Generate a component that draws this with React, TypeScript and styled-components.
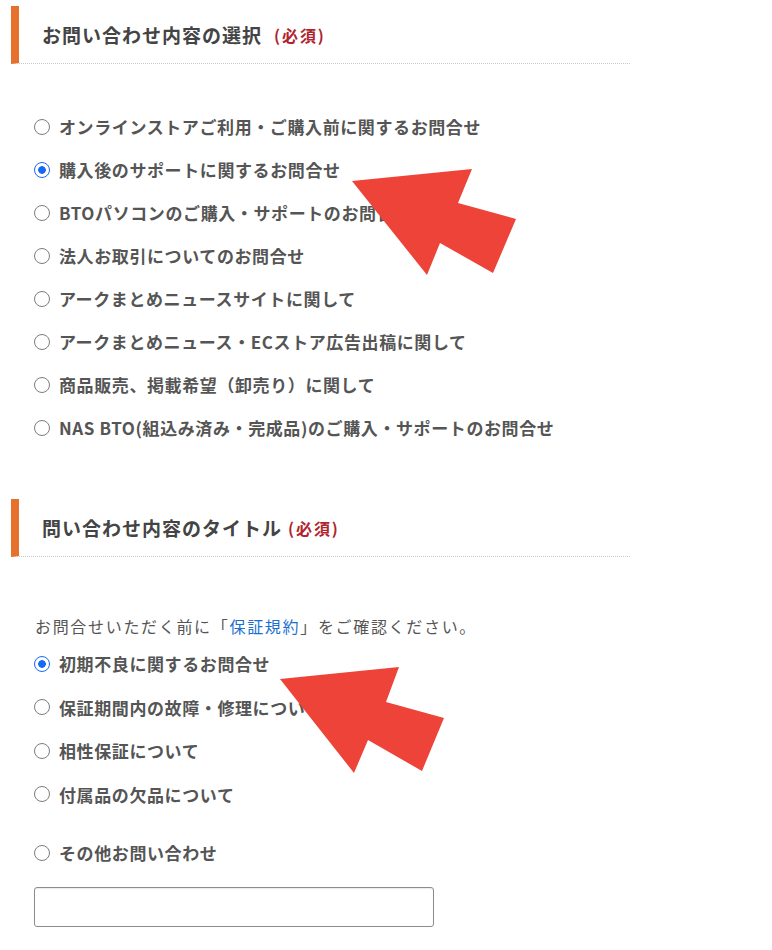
import React from 'react';
import styled, { createGlobalStyle } from 'styled-components';

const GlobalStyle = createGlobalStyle`
  body {
    margin: 0;
    background: #fff;
    font-family: "Noto Sans CJK JP", "Noto Sans", sans-serif;
  }
`;

const Page = styled.div`
  position: relative;
  width: 772px;
  height: 950px;
  overflow: hidden;
`;

const Section = styled.section<{ $top: number }>`
  padding-top: ${(p) => p.$top}px;
`;

const Heading = styled.h2`
  box-sizing: border-box;
  width: 619px;
  height: 58px;
  margin: 0 0 0 11px;
  padding-left: 23px;
  display: flex;
  align-items: center;
  border-left: 8px solid #e6712c;
  border-bottom: 1px dotted #c9c9c9;
  font-size: 19px;
  font-weight: bold;
  color: #444;
  letter-spacing: 1px;
`;

const Required = styled.span<{ $gap: number }>`
  margin-left: ${(p) => p.$gap}px;
  font-size: 16px;
  color: #b0242e;
  letter-spacing: 0.12em;
`;

const RadioList = styled.div<{ $top: number }>`
  margin-top: ${(p) => p.$top}px;
  display: flex;
  flex-direction: column;
`;

const RadioRow = styled.label<{ $step: number; $top?: number }>`
  height: ${(p) => p.$step}px;
  margin: ${(p) => p.$top || 0}px 0 0 34px;
  display: flex;
  align-items: center;
  gap: 9px;
  font-size: 17px;
  font-weight: bold;
  color: #555;
  letter-spacing: 0.6px;
  cursor: pointer;
`;

const Radio = styled.input`
  appearance: none;
  box-sizing: border-box;
  flex: none;
  width: 16px;
  height: 16px;
  margin: 0;
  border: 1px solid #7c7c7c;
  border-radius: 50%;
  background: #fff;

  &:checked {
    border: 1.5px solid #1769f5;
    background: radial-gradient(circle, #1769f5 0 3.5px, #fff 4.1px);
  }
`;

const Note = styled.p`
  margin: 57px 0 0 35px;
  height: 24px;
  line-height: 24px;
  font-size: 16px;
  color: #555;
  letter-spacing: 0.105em;
`;

const TermsLink = styled.a`
  color: #1b6fcf;
  text-decoration: none;
`;

const TextBox = styled.input`
  box-sizing: border-box;
  display: block;
  width: 400px;
  height: 40px;
  margin: 12px 0 0 34px;
  border: 1px solid #8c8c8c;
  border-radius: 3px;
  box-shadow: inset 0 1px 1px rgba(0, 0, 0, 0.08);
`;

const Overlay = styled.svg`
  position: absolute;
  top: 0;
  left: 0;
  pointer-events: none;
`;

const inquiryTypes = [
  'オンラインストアご利用・ご購入前に関するお問合せ',
  '購入後のサポートに関するお問合せ',
  'BTOパソコンのご購入・サポートのお問合せ',
  '法人お取引についてのお問合せ',
  'アークまとめニュースサイトに関して',
  'アークまとめニュース・ECストア広告出稿に関して',
  '商品販売、掲載希望（卸売り）に関して',
  'NAS BTO(組込み済み・完成品)のご購入・サポートのお問合せ',
];

const titles = [
  '初期不良に関するお問合せ',
  '保証期間内の故障・修理について',
  '相性保証について',
  '付属品の欠品について',
];

const arrows = [
  '352,181 472,169 458,203 516,219 493,273 440,243 427,275',
  '280,679 399,667 386,702 444,718 422,771 368,740 354,773',
];

export default function App() {
  return (
    <Page>
      <GlobalStyle />
      <Section $top={6}>
        <Heading>
          お問い合わせ内容の選択<Required $gap={12}>(必須)</Required>
        </Heading>
        <RadioList $top={41}>
          {inquiryTypes.map((t, i) => (
            <RadioRow key={t} $step={43}>
              <Radio type="radio" name="type" defaultChecked={i === 1} />
              {t}
            </RadioRow>
          ))}
        </RadioList>
      </Section>

      <Section $top={50}>
        <Heading>
          問い合わせ内容のタイトル<Required $gap={6}>(必須)</Required>
        </Heading>
        <Note>
          お問合せいただく前に「<TermsLink href="#">保証規約</TermsLink>」をご確認ください。
        </Note>
        <RadioList $top={4}>
          {titles.map((t, i) => (
            <RadioRow key={t} $step={43.5}>
              <Radio type="radio" name="title" defaultChecked={i === 0} />
              {t}
            </RadioRow>
          ))}
          <RadioRow $step={43.5} $top={15}>
            <Radio type="radio" name="title" />
            その他お問い合わせ
          </RadioRow>
        </RadioList>
        <TextBox type="text" />
      </Section>

      <Overlay width="772" height="950" viewBox="0 0 772 950">
        {arrows.map((pts) => (
          <polygon key={pts} points={pts} fill="#ee4338" />
        ))}
      </Overlay>
    </Page>
  );
}
